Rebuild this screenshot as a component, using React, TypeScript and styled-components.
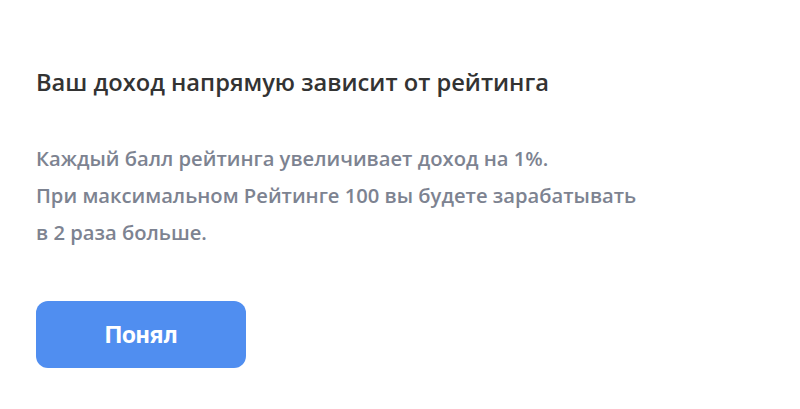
import React from "react";
import styled, { createGlobalStyle } from "styled-components";

const Global = createGlobalStyle`
  html, body { margin: 0; padding: 0; background: #ffffff; }
  body { font-family: "Open Sans", "Noto Sans", sans-serif; }
`;

const Page = styled.div`
  width: 800px;
  height: 409px;
  box-sizing: border-box;
  padding: 66px 36px 0 36px;
  display: flex;
  flex-direction: column;
  align-items: flex-start;
`;

const Title = styled.h2`
  margin: 0;
  font-family: "Open Sans", sans-serif;
  font-weight: 600;
  font-size: 23.7px;
  line-height: 32px;
  color: #333333;
`;

const Text = styled.p`
  margin: 42px 0 0 0;
  font-family: "Open Sans", sans-serif;
  font-weight: 600;
  font-size: 20.2px;
  line-height: 37px;
  color: #7d8391;
`;

const Button = styled.button`
  margin-top: 50px;
  width: 210px;
  height: 67px;
  border: none;
  border-radius: 12px;
  background: #508ef0;
  color: #ffffff;
  font-family: "Roboto", sans-serif;
  font-weight: 700;
  font-size: 24.5px;
  cursor: pointer;
`;

export default function App() {
  return (
    <>
      <Global />
      <Page>
        <Title>Ваш доход напрямую зависит от рейтинга</Title>
        <Text>
          Каждый балл рейтинга увеличивает доход на 1%.
          <br />
          При максимальном Рейтинге 100 вы будете зарабатывать
          <br />в 2 раза больше.
        </Text>
        <Button>Понял</Button>
      </Page>
    </>
  );
}
